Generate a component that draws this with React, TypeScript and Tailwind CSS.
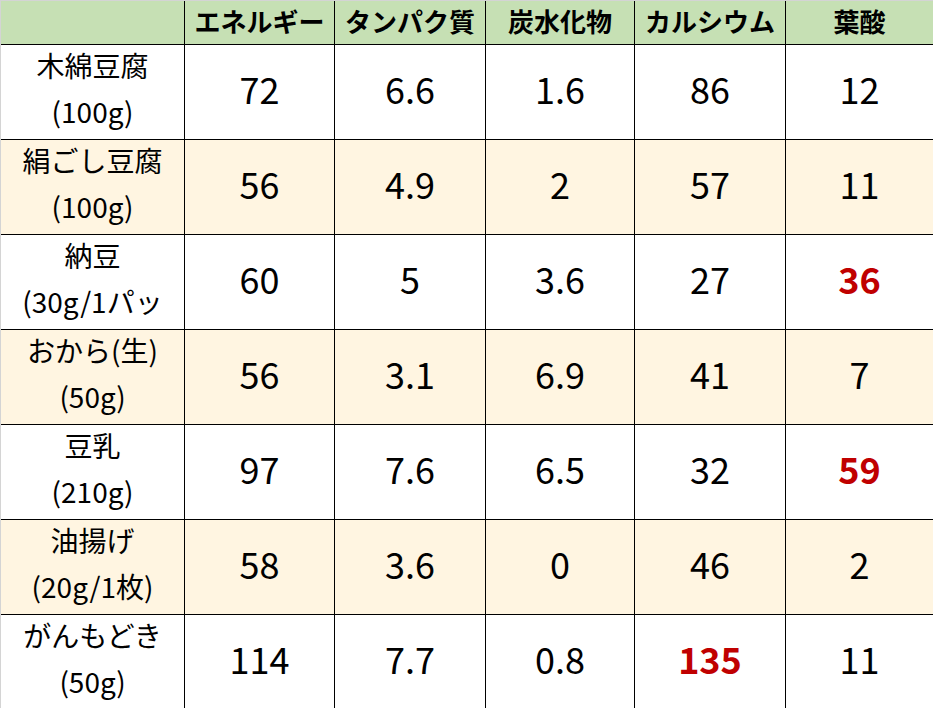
const headers = ["エネルギー", "タンパク質", "炭水化物", "カルシウム", "葉酸"];

type Row = {
  name: string;
  amount: string;
  values: string[];
  red?: number[];
};

const rows: Row[] = [
  { name: "木綿豆腐", amount: "(100g)", values: ["72", "6.6", "1.6", "86", "12"] },
  { name: "絹ごし豆腐", amount: "(100g)", values: ["56", "4.9", "2", "57", "11"] },
  { name: "納豆", amount: "(30g/1パッ", values: ["60", "5", "3.6", "27", "36"], red: [4] },
  { name: "おから(生)", amount: "(50g)", values: ["56", "3.1", "6.9", "41", "7"] },
  { name: "豆乳", amount: "(210g)", values: ["97", "7.6", "6.5", "32", "59"], red: [4] },
  { name: "油揚げ", amount: "(20g/1枚)", values: ["58", "3.6", "0", "46", "2"] },
  { name: "がんもどき", amount: "(50g)", values: ["114", "7.7", "0.8", "135", "11"], red: [3] },
];

const App = () => {
  return (
    <div className="h-[708px] w-[933px] overflow-hidden bg-white font-['Noto_Sans_CJK_JP',sans-serif] text-black">
      <div className="grid grid-cols-[183px_149px_150px_148px_150px_1fr] grid-rows-[43px_repeat(7,94px)] gap-px border-l border-t border-[#d4d4d4] bg-black">
        {/* Header */}
        <div className="bg-[#c6e0b4]" />
        {headers.map((h) => (
          <div key={h} className="flex items-center justify-center bg-[#c6e0b4] pb-1 text-[26px] font-bold leading-none">
            {h}
          </div>
        ))}

        {rows.map((row, i) => {
          const bg = i % 2 === 1 ? "bg-[#fff5e1]" : "bg-white";
          return [
            <div key={`${i}-name`} className={`${bg} flex flex-col items-center justify-center overflow-hidden pb-2 text-[28px] leading-[46px]`}>
              <span className="whitespace-nowrap">{row.name}</span>
              <span className="whitespace-nowrap">{row.amount}</span>
            </div>,
            ...row.values.map((v, j) => (
              <div
                key={`${i}-${j}`}
                className={`${bg} flex items-center justify-center pb-2 text-[36px] leading-none ${
                  row.red?.includes(j) ? "font-bold text-[#c00000]" : ""
                }`}
              >
                {v}
              </div>
            )),
          ];
        })}
      </div>
    </div>
  );
};

export default App;
